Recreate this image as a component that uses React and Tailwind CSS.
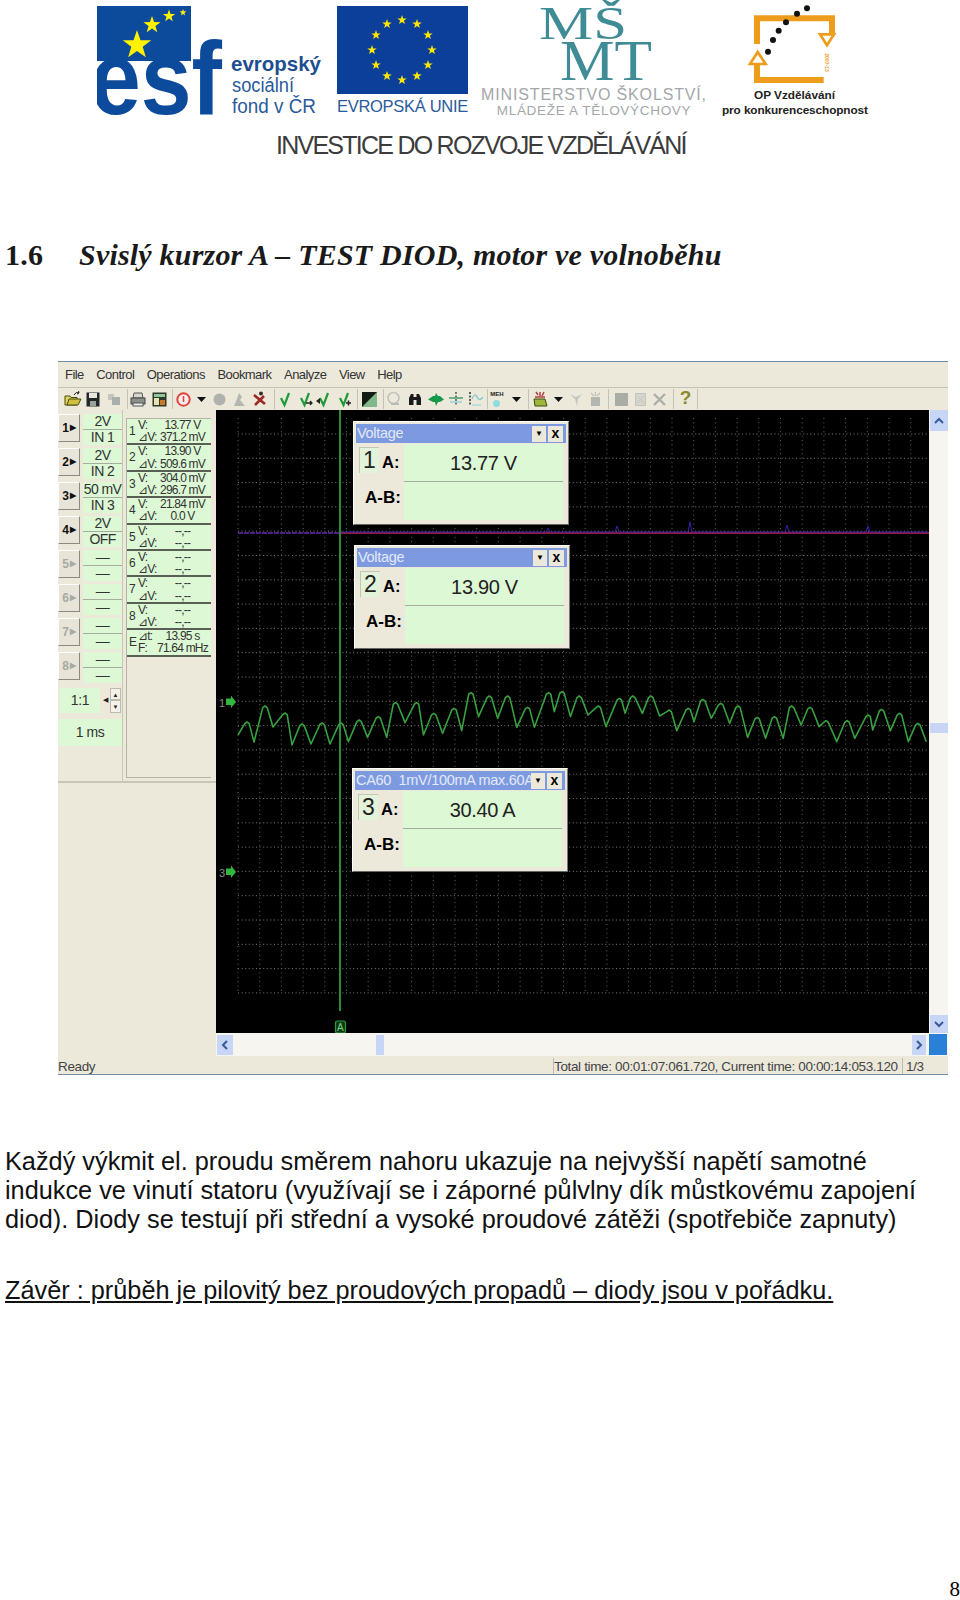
import React from 'react';

const SANS = "font-['Liberation_Sans',sans-serif]";

// channel buttons on the left of the scope window
const channels = [
    { id: 1, top: '2V', bottom: 'IN 1', on: true },
    { id: 2, top: '2V', bottom: 'IN 2', on: true },
    { id: 3, top: '50 mV', bottom: 'IN 3', on: true },
    { id: 4, top: '2V', bottom: 'OFF', on: true },
    { id: 5, top: '—', bottom: '—' },
    { id: 6, top: '—', bottom: '—' },
    { id: 7, top: '—', bottom: '—' },
    { id: 8, top: '—', bottom: '—' },
];

const readings = [
    ['1', 'V:', '13.77 V', '⊿V:', '371.2 mV'],
    ['2', 'V:', '13.90 V', '⊿V:', '509.6 mV'],
    ['3', 'V:', '304.0 mV', '⊿V:', '296.7 mV'],
    ['4', 'V:', '21.84 mV', '⊿V:', '0.0 V'],
    ['5', 'V:', '--,--', '⊿V:', '--,--'],
    ['6', 'V:', '--,--', '⊿V:', '--,--'],
    ['7', 'V:', '--,--', '⊿V:', '--,--'],
    ['8', 'V:', '--,--', '⊿V:', '--,--'],
    ['E', '⊿t:', '13.95 s', 'F:', '71.64 mHz'],
];

const menu = ['File', 'Control', 'Operations', 'Bookmark', 'Analyze', 'View', 'Help'];

// first part read off the page, the rest from a crop (x / 2.613, y / 3)
const waveStart = [[238, 735], [247, 722], [254, 742], [265, 706], [273, 727], [285, 713], [292, 745], [302, 724], [311, 744], [322, 723], [330, 744], [341, 723]];
const waveCrop = [22, 185, 50, 120, 72, 172, 100, 110, 122, 172, 145, 68, 170, 128, 200, 68, 218, 165, 245, 100, 268, 160, 298, 85, 318, 152, 342, 38, 362, 110, 390, 48, 412, 115, 438, 48, 462, 142, 490, 82, 508, 142, 545, 38, 560, 95, 580, 35, 602, 110, 625, 48, 648, 105, 675, 78, 695, 140, 730, 55, 745, 100, 765, 48, 790, 100, 812, 48, 835, 108, 860, 90, 880, 152, 910, 85, 925, 125, 948, 58, 970, 115, 995, 70, 1018, 130, 1040, 78, 1065, 172, 1090, 112, 1112, 175, 1135, 110, 1158, 175, 1180, 78, 1205, 135, 1228, 82, 1252, 140, 1270, 122, 1298, 185, 1325, 122, 1345, 175, 1380, 105, 1392, 150, 1415, 88, 1438, 152, 1462, 100, 1485, 185, 1510, 130, 1532, 185];

function wavePoints() {
    const pts = waveStart.map(([x, y]) => [x - 216, y - 410]);
    for (let i = 0; i < waveCrop.length; i += 2) {
        pts.push([340 + waveCrop[i] / 2.613 - 216, 680 + waveCrop[i + 1] / 3 - 410]);
    }
    const out = [];
    pts.forEach(([x, y], i) => {
        // peaks are rounded in the trace, valleys stay sharp
        if (i % 2 === 1) {
            out.push(`${x - 2.2},${y + 1.6}`, `${x},${y}`, `${x + 2.2},${y + 1.6}`);
        } else {
            out.push(`${x},${y}`);
        }
    });
    return out.join(' ');
}

function spikePoints() {
    const out = ['124,122'];
    [[332, 118], [401, 116], [474, 112], [571, 115], [652, 116]].forEach(([x, y]) => {
        out.push(`${x - 2},122`, `${x},${y}`, `${x + 2},122`);
    });
    out.push('712,122');
    return out.join(' ');
}

function starPoints(cx, cy, r) {
    const pts = [];
    for (let i = 0; i < 10; i++) {
        const rad = i % 2 === 0 ? r : r * 0.4;
        const a = -Math.PI / 2 + (i * Math.PI) / 5;
        pts.push(`${cx + rad * Math.cos(a)},${cy + rad * Math.sin(a)}`);
    }
    return pts.join(' ');
}

function EsfLogo() {
    return (
        <svg width="226" height="118" viewBox="0 0 226 118" className="shrink-0">
            <rect x="0" y="6" width="94" height="55" fill="#0c4a9b" />
            <polygon points={starPoints(40, 45, 15)} fill="#fff200" />
            <polygon points={starPoints(55, 25, 9)} fill="#fff200" />
            <polygon points={starPoints(72, 16, 6.5)} fill="#fff200" />
            <polygon points={starPoints(86, 12.5, 3.6)} fill="#fff200" />
            <text x="-7" y="114" fontSize="104" fontWeight="700" fill="#0c4a9b" textLength="132" lengthAdjust="spacingAndGlyphs">esf</text>
            <text x="134" y="71" fontSize="21" fontWeight="700" fill="#1d4e8f" textLength="90" lengthAdjust="spacingAndGlyphs">evropský</text>
            <text x="135" y="92" fontSize="20" fill="#2a5a9a" textLength="62" lengthAdjust="spacingAndGlyphs">sociální</text>
            <text x="135" y="113" fontSize="20" fill="#2a5a9a" textLength="84" lengthAdjust="spacingAndGlyphs">fond v ČR</text>
        </svg>
    );
}

function EuLogo() {
    const stars = [];
    for (let i = 0; i < 12; i++) {
        const a = (i * Math.PI) / 6;
        stars.push(<polygon key={i} points={starPoints(65 + 30 * Math.sin(a), 44 - 30 * Math.cos(a), 5)} fill="#ffe600" />);
    }
    return (
        <div className="ml-[14px] w-[131px] shrink-0">
            <svg width="131" height="88" viewBox="0 0 131 88" className="mt-[6px] block">
                <rect width="131" height="88" fill="#0b3f9a" />
                {stars}
            </svg>
            <div className="mt-[3px] text-[16.5px] leading-[18px] tracking-[-0.3px] whitespace-nowrap text-[#2a5a9a]">EVROPSKÁ UNIE</div>
        </div>
    );
}

function MsmtLogo() {
    return (
        <div className="ml-[12px] w-[228px] shrink-0">
            <svg width="228" height="87" viewBox="0 0 228 87" className="block">
                <g className="font-['Liberation_Serif',serif]" fill="#3f8c96">
                    <text x="59" y="39" fontSize="46" textLength="88" lengthAdjust="spacingAndGlyphs">MŠ</text>
                    <text x="80" y="80" fontSize="58" textLength="92" lengthAdjust="spacingAndGlyphs">MT</text>
                </g>
            </svg>
            <div className="text-center text-[16px] leading-[16px] tracking-[0.85px] whitespace-nowrap text-[#a3a7aa]">MINISTERSTVO ŠKOLSTVÍ,</div>
            <div className="text-center text-[13.5px] leading-[15px] tracking-[0.7px] whitespace-nowrap text-[#a3a7aa]">MLÁDEŽE A TĚLOVÝCHOVY</div>
        </div>
    );
}

function OpMark() {
    return (
        <svg width="96" height="86" viewBox="660 0 288 258" className="mx-auto block">
            <g fill="none" stroke="#ee9c1c">
                <path d="M690 132 V55 H915 V100" strokeWidth="18" />
                <path d="M690 190 V240 H890" strokeWidth="18" />
                <path d="M879 103 H921 L900 136 Z" strokeWidth="8" fill="#fff" />
                <path d="M669 192 H716 L692 156 Z" strokeWidth="8" fill="#fff" />
            </g>
            <g fill="#111">
                <circle cx="840" cy="25" r="9" />
                <circle cx="810" cy="41" r="9" />
                <circle cx="777" cy="67" r="9" />
                <circle cx="755" cy="92" r="9" />
                <circle cx="738" cy="120" r="9" />
                <circle cx="723" cy="155" r="9" />
            </g>
            <text x="0" y="0" fontSize="15" fontWeight="700" fill="#ee9c1c" transform="translate(893 160) rotate(90)">2007-13</text>
        </svg>
    );
}

function Header() {
    return (
        <header className="h-[170px]">
            <div className="flex pl-[97px]">
                <EsfLogo />
                <EuLogo />
                <MsmtLogo />
                <div className="ml-[14px] w-[145px] shrink-0 text-center font-bold text-[#222]">
                    <OpMark />
                    <div className="mt-[2px] text-[11.8px] leading-[15px]">OP Vzdělávání</div>
                    <div className="text-[11.8px] leading-[15px] whitespace-nowrap tracking-[-0.1px]">pro konkurenceschopnost</div>
                </div>
            </div>
            <div className="mt-[13px] ml-[276px] text-[25px] leading-[28px] tracking-[-1.75px] whitespace-nowrap text-[#3c3c3c]">
                INVESTICE DO ROZVOJE VZDĚLÁVÁNÍ
            </div>
        </header>
    );
}

function Check({ extra }) {
    return (
        <svg width="18" height="18" viewBox="0 0 18 18">
            <path d="M5 8 L8.5 15 L13 3" fill="none" stroke="#1f9a3a" strokeWidth="2.2" />
            {extra === 'right' && <path d="M10 13 H16 M14 11 L16 13 L14 15" stroke="#222" strokeWidth="1.3" fill="none" />}
            {extra === 'left' && <path d="M1 11 L5 8 V14 Z" fill="#222" />}
            {extra === 'plus' && <path d="M11 13 H16 M13.5 10.5 V15.5" stroke="#222" strokeWidth="1.5" />}
        </svg>
    );
}

function ToolIcon({ name }) {
    switch (name) {
        case 'open':
            return (
                <svg width="18" height="16" viewBox="0 0 18 16">
                    <path d="M1 5 H6 L7 6.5 H13 V14 H1 Z" fill="#e3d45a" stroke="#4a4a10" />
                    <path d="M3 14 L5 8 H17 L14 14 Z" fill="#cfc040" stroke="#4a4a10" />
                    <path d="M10 4 Q12 0 15 2 M13 3 L15 2 L14.5 0" fill="none" stroke="#222" />
                </svg>
            );
        case 'save':
            return (
                <svg width="14" height="15" viewBox="0 0 14 15">
                    <rect x="0.5" y="0.5" width="13" height="14" fill="#22282a" />
                    <rect x="3" y="1" width="8" height="5" fill="#e8e8e0" />
                    <rect x="4" y="9" width="6" height="5" fill="#9aa09a" />
                </svg>
            );
        case 'grayclip':
            return (
                <svg width="14" height="14" viewBox="0 0 14 14">
                    <rect x="1" y="2" width="6" height="6" fill="#c3c6c0" />
                    <rect x="5" y="5" width="8" height="8" fill="#a9afaa" />
                </svg>
            );
        case 'print':
            return (
                <svg width="16" height="15" viewBox="0 0 16 15">
                    <path d="M4 1 H12 L13 6 H3 Z" fill="#d8d8d0" stroke="#555" />
                    <rect x="1" y="6" width="14" height="6" fill="#8d8f8c" stroke="#444" />
                    <rect x="3" y="11" width="10" height="3" fill="#eee" stroke="#555" />
                </svg>
            );
        case 'panel':
            return (
                <svg width="15" height="15" viewBox="0 0 15 15">
                    <rect x="0.5" y="0.5" width="14" height="14" fill="#2c3a2a" />
                    <rect x="2" y="2" width="11" height="3" fill="#8fc79a" />
                    <rect x="2" y="6" width="5" height="7" fill="#e9e2b0" />
                    <rect x="8" y="8" width="5" height="5" fill="#c8792c" />
                </svg>
            );
        case 'power':
            return (
                <svg width="15" height="15" viewBox="0 0 15 15">
                    <circle cx="7.5" cy="7.5" r="6.2" fill="#fbeeee" stroke="#e0443c" strokeWidth="2" />
                    <path d="M7.5 4 V10" stroke="#e0443c" strokeWidth="1.6" />
                </svg>
            );
        case 'arrow':
            return <svg width="9" height="5" viewBox="0 0 9 5"><path d="M0 0 H9 L4.5 5 Z" fill="#111" /></svg>;
        case 'dot':
            return <svg width="13" height="13" viewBox="0 0 13 13"><circle cx="6.5" cy="6.5" r="6" fill="#b0b2ad" /></svg>;
        case 'grayman':
            return (
                <svg width="15" height="15" viewBox="0 0 15 15">
                    <path d="M7 1 L10 5 L8 8 L13 14 H2 L5 7 Z" fill="#b4b6b0" />
                </svg>
            );
        case 'redman':
            return (
                <svg width="15" height="16" viewBox="0 0 15 16">
                    <circle cx="9" cy="2.5" r="2" fill="#3a2a20" />
                    <path d="M2 4 L13 13 M12 5 L3 14" stroke="#9c2a24" strokeWidth="2.6" />
                </svg>
            );
        case 'check':
            return <Check />;
        case 'checkR':
            return <Check extra="right" />;
        case 'checkL':
            return <Check extra="left" />;
        case 'checkP':
            return <Check extra="plus" />;
        case 'contrast':
            return (
                <svg width="15" height="15" viewBox="0 0 15 15">
                    <rect width="15" height="15" fill="#7fb98a" />
                    <path d="M0 0 H15 L0 15 Z" fill="#121c14" />
                </svg>
            );
        case 'graysearch':
            return (
                <svg width="16" height="16" viewBox="0 0 16 16">
                    <circle cx="7.5" cy="7" r="5.5" fill="none" stroke="#c0c2bc" strokeWidth="1.6" />
                    <path d="M5 13 H13" stroke="#b8bab4" strokeWidth="2" />
                </svg>
            );
        case 'binoc':
            return (
                <svg width="14" height="14" viewBox="0 0 14 14">
                    <path d="M1 6 L3 2 H5.5 V13 H1 Z M13 6 L11 2 H8.5 V13 H13 Z" fill="#1a1a1a" />
                    <rect x="5" y="5" width="4" height="3" fill="#1a1a1a" />
                </svg>
            );
        case 'greenarrow':
            return (
                <svg width="16" height="13" viewBox="0 0 16 13">
                    <path d="M0 6.5 L5 3 H7 L8 0 L10 3 H12 L16 6.5 L12 9 H10 L8 13 L7 9 H5 Z" fill="#159a48" />
                </svg>
            );
        case 'cross':
            return (
                <svg width="16" height="16" viewBox="0 0 16 16">
                    <path d="M8 1 V15" stroke="#333" strokeWidth="1.2" strokeDasharray="2 1.5" />
                    <path d="M1 7 H15" stroke="#3b9a6a" strokeWidth="1.4" />
                    <path d="M2 11 H14" stroke="#8fd4d8" strokeWidth="1.4" />
                </svg>
            );
        case 'waves':
            return (
                <svg width="16" height="16" viewBox="0 0 16 16">
                    <path d="M2 1 V15" stroke="#222" strokeWidth="1.4" strokeDasharray="2 1.5" />
                    <path d="M4 8 Q7 1 9 6 T15 6" fill="none" stroke="#7fc8cc" strokeWidth="1.3" />
                    <path d="M4 14 H13" stroke="#9fdada" strokeWidth="1.3" />
                </svg>
            );
        case 'meh':
            return (
                <div className="relative h-[16px] w-[15px] text-center">
                    <span className="block text-[6px] leading-[7px] font-bold text-[#222]">MEH</span>
                    <span className="absolute top-[9px] left-[3px] h-[7px] w-[7px] rounded-full bg-[#8fdcdc]" />
                </div>
            );
        case 'folderabc':
            return (
                <svg width="16" height="16" viewBox="0 0 16 16">
                    <path d="M2 8 H13 L15 15 H3 Z" fill="#9fb63c" stroke="#3f4a10" />
                    <path d="M4 1 L6 4 M8 1 L8 5 M12 1 L10 5 M3 6 H13" stroke="#b0413c" strokeWidth="1.5" />
                </svg>
            );
        case 'graytip':
            return (
                <svg width="15" height="15" viewBox="0 0 15 15">
                    <path d="M1 2 L7 5 L13 2 L9 7 L8 14 L6 7 Z" fill="#c4c6c0" />
                </svg>
            );
        case 'graybox':
            return (
                <svg width="15" height="15" viewBox="0 0 15 15">
                    <rect x="3" y="5" width="9" height="9" fill="#b4b6b0" />
                    <path d="M3 1 L6 4 M12 1 L9 4 M7.5 0 V4" stroke="#bdbfb9" strokeWidth="1.2" />
                </svg>
            );
        case 'graysq':
            return <div className="h-[13px] w-[13px] bg-[#aaaca6]" />;
        case 'graysmall':
            return (
                <svg width="11" height="13" viewBox="0 0 11 13">
                    <rect x="0.5" y="0.5" width="10" height="12" fill="#d6d6ce" stroke="#c3c4bc" />
                    <path d="M2 3 L9 10 M9 3 L2 10" stroke="#c3c4bc" />
                </svg>
            );
        case 'grayx':
            return (
                <svg width="13" height="13" viewBox="0 0 13 13">
                    <path d="M1 1 L12 12 M12 1 L1 12" stroke="#acaea8" strokeWidth="2.4" />
                </svg>
            );
        case 'help':
            return <span className="text-[19px] leading-[19px] font-bold text-[#8a8a2a]">?</span>;
        default:
            return null;
    }
}

const tools = [
    ['open', 'w-[20px]'], ['save', 'w-[20px]'], ['grayclip', 'w-[22px]'], ['sep', 'w-[3px]'],
    ['print', 'w-[20px]'], ['panel', 'w-[22px]'], ['sep', 'w-[3px]'],
    ['power', 'w-[20px]'], ['arrow', 'w-[16px]'], ['dot', 'w-[20px]'], ['grayman', 'w-[20px]'], ['redman', 'w-[20px]'], ['sep', 'w-[6px]'],
    ['check', 'w-[20px]'], ['checkR', 'w-[19px]'], ['checkL', 'w-[20px]'], ['checkP', 'w-[20px]'], ['sep', 'w-[4px]'],
    ['contrast', 'w-[22px]'], ['sep', 'w-[4px]'],
    ['graysearch', 'w-[20px]'], ['binoc', 'w-[22px]'], ['greenarrow', 'w-[20px]'], ['cross', 'w-[20px]'], ['waves', 'w-[20px]'], ['sep', 'w-[2px]'],
    ['meh', 'w-[18px]'], ['arrow', 'w-[20px]'], ['sep', 'w-[3px]'],
    ['folderabc', 'w-[22px]'], ['arrow', 'w-[14px]'], ['graytip', 'w-[22px]'], ['graybox', 'w-[16px]'], ['sep', 'w-[6px]'],
    ['graysq', 'w-[24px]'], ['graysmall', 'w-[14px]'], ['grayx', 'w-[24px]'], ['sep', 'w-[3px]'],
    ['help', 'w-[23px]'], ['sep', 'w-[1px]'],
];

function Toolbar() {
    return (
        <div className="flex h-[23px] items-center border-t border-[#c4c2b6] bg-[#ece9db] pl-[5px]">
            {tools.map(([name, width], i) =>
                name === 'sep' ? (
                    <div key={i} className={`${width} h-[20px] shrink-0 border-r border-[#c4c2b6]`} />
                ) : (
                    <div key={i} className={`${width} flex h-[20px] shrink-0 items-center justify-center`}>
                        <div className="shrink-0"><ToolIcon name={name} /></div>
                    </div>
                )
            )}
        </div>
    );
}

function ChannelRow({ ch }) {
    return (
        <div className="flex h-[34px] items-start">
            <div className={`flex h-[28px] w-[22px] items-center justify-center border border-t-white border-l-white border-r-[#8c8a80] border-b-[#8c8a80] bg-[#e8e5d8] text-[12px] font-bold ${ch.on ? 'text-[#111]' : 'text-[#a9a9a2]'}`}>
                {ch.id}<span className="ml-[1px] text-[8px]">▶</span>
            </div>
            <div className="ml-[3px] w-[39px] text-center text-[14px] leading-[15px] tracking-[-0.6px] whitespace-nowrap text-[#333]">
                <div className="h-[15px] bg-[#dcf8d4]">{ch.top}</div>
                <div className="h-[16px] border-t border-[#a8aca0] bg-[#dcf8d4]">{ch.bottom}</div>
            </div>
        </div>
    );
}

function ReadingRow({ row }) {
    return (
        <div className="grid h-[26.4px] grid-cols-[11px_19px_minmax(0,1fr)] border-b-2 border-[#5a5f56] bg-[#dcf8d4] text-[12px] leading-[12.2px] tracking-[-0.8px] text-[#333]">
            <div className="row-span-2 pl-[2px] text-[12px] leading-[24px]">{row[0]}</div>
            <div className="whitespace-nowrap">{row[1]}</div>
            <div className="pr-[3px] text-center whitespace-nowrap">{row[2]}</div>
            <div className="whitespace-nowrap">{row[3]}</div>
            <div className="pr-[3px] text-center whitespace-nowrap">{row[4]}</div>
        </div>
    );
}

function LeftPanel() {
    return (
        <aside className="w-[158px] shrink-0 bg-[#ece9db]">
            <div className="flex h-[373px] border-b-2 border-[#c9c6b8]">
                <div className="w-[65px] shrink-0 border-r border-[#c9c6b8] pt-[4px]">
                    {channels.map((ch) => <ChannelRow key={ch.id} ch={ch} />)}
                    <div className="mt-[2px] flex h-[25px] w-[63px] items-center pl-[2px]">
                        <div className="flex h-full w-[40px] items-center justify-center bg-[#dcf8d4] text-[14px] tracking-[-0.3px] text-[#333]">1:1</div>
                        <div className="flex h-full w-[10px] items-center justify-center text-[7px] text-[#222]">◀</div>
                        <div className="flex h-full w-[11px] flex-col text-center text-[6px] leading-[12px] text-[#222]">
                            <div className="h-[12px] border border-[#bdbbae] bg-[#f3f1e8]">▲</div>
                            <div className="h-[13px] border border-[#bdbbae] bg-[#f3f1e8]">▼</div>
                        </div>
                    </div>
                    <div className="mt-[6px] flex h-[27px] w-[64px] items-center justify-center bg-[#dcf8d4] text-[14px] tracking-[-0.5px] text-[#333]">1 ms</div>
                </div>
                <div className="min-w-0 flex-1 pt-[8px] pr-[5px] pl-[3px]">
                    <div className="h-[360px] border-t border-b border-l border-[#b5b3a6]">
                        {readings.map((row) => <ReadingRow key={row[0]} row={row} />)}
                    </div>
                </div>
            </div>
        </aside>
    );
}

function Dialog({ title, channel, value, className }) {
    return (
        <div className={`absolute flex h-[104px] w-[216px] flex-col border border-t-white border-l-white border-r-[#777] border-b-[#666] bg-[#ece9db] p-[2px] ${className}`}>
            <div className="flex h-[19px] items-center justify-between bg-[#7d9ae0] pr-[3px] pl-[1px]">
                <span className="overflow-hidden text-[14.5px] leading-[19px] tracking-[-0.3px] whitespace-pre text-[#e3e9fb]">{title}</span>
                <div className="flex shrink-0 gap-[2px] text-black">
                    <span className="flex h-[16px] w-[14px] items-center justify-center bg-[#ece9db] text-[8px]">▼</span>
                    <span className="flex h-[16px] w-[15px] items-center justify-center bg-[#ece9db] text-[14px] font-bold">x</span>
                </div>
            </div>
            <div className="flex flex-1 pt-[1px] text-black">
                <div className="relative w-[48px] shrink-0">
                    <span className="absolute top-[3px] left-[3px] h-[26px] w-[20px] border-t border-l border-[#c5c4b6] bg-[#e3f3da] text-center text-[23px] leading-[24px] text-[#222]">{channel}</span>
                    <span className="absolute top-[8px] left-[26px] text-[16.5px] leading-[20px] font-bold">A:</span>
                    <span className="absolute top-[44px] left-[9px] text-[17px] leading-[20px] font-bold">A-B:</span>
                </div>
                <div className="flex-1 pr-[3px]">
                    <div className="flex h-[38px] items-center justify-center border-b border-[#a8aca0] bg-[#dcf8d4] text-[20px] tracking-[-0.3px] text-[#222]">{value}</div>
                    <div className="h-[38px] bg-[#dcf8d4]" />
                </div>
            </div>
        </div>
    );
}

function ScopeDrawing() {
    const cols = [];
    for (let i = 0; i < 32; i++) cols.push(22 + i * 21.7);
    const rows = [];
    for (let i = 0; i < 24; i++) rows.push(24 + i * 24.3);
    return (
        <svg className="absolute inset-0" width="713" height="623" viewBox="0 0 713 623">
            {rows.map((y) => <path key={y} d={`M22 ${y} H712`} stroke="#7d7d76" strokeWidth="1" strokeDasharray="1 2.6" />)}
            {cols.map((x) => <path key={x} d={`M${x} 8 V584`} stroke="#62625c" strokeWidth="1" strokeDasharray="1 3.4" />)}
            <path d="M124 123 H713" stroke="#8e1846" strokeWidth="2" />
            <path d="M22 123 H124" stroke="#4a1f8a" strokeWidth="2" strokeDasharray="5 1" />
            <polyline points={spikePoints()} fill="none" stroke="#3422a8" strokeWidth="1" />
            <path d="M124 0 V601" stroke="#2e8b36" strokeWidth="2" />
            <polyline points={wavePoints()} fill="none" stroke="#38a040" strokeWidth="1.6" strokeLinejoin="round" />
            <polygon points="10,288.5 15,288.5 15,285.5 20,292 15,298 15,295 10,295" fill="#2fb83c" />
            <polygon points="10,458.5 15,458.5 15,455.5 20,462 15,468 15,465 10,465" fill="#2fb83c" />
            <text x="3" y="297" fontSize="11" fill="#8a8a82">1</text>
            <text x="3" y="467" fontSize="11" fill="#8a8a82">3</text>
            <rect x="119.5" y="611" width="10" height="12" rx="2" fill="#0d3a12" stroke="#2e9a3a" strokeWidth="1.2" />
            <text x="121" y="621" fontSize="10" fill="#7fd08a">A</text>
        </svg>
    );
}

function Chevron({ d }) {
    return (
        <svg width="10" height="10" viewBox="0 0 10 10">
            <path d={d} fill="none" stroke="#3a5a9a" strokeWidth="2" />
        </svg>
    );
}

function ScopeWindow() {
    return (
        <section className="mt-[87px] ml-[58px] flex h-[714px] w-[890px] flex-col border-t border-[#6f8fa8] bg-[#ece9db] text-[#333]">
            <nav className="flex h-[25px] items-center gap-[12.5px] pl-[7px] text-[13px] tracking-[-0.55px]">
                {menu.map((m) => <span key={m}>{m}</span>)}
            </nav>
            <Toolbar />
            <div className="flex h-[646px]">
                <LeftPanel />
                <div className="flex flex-1 flex-col">
                    <div className="flex h-[623px]">
                        <div className="relative w-[713px] shrink-0 bg-black">
                            <ScopeDrawing />
                            <Dialog title="Voltage" channel="1" value="13.77 V" className="top-[11px] left-[137px]" />
                            <Dialog title="Voltage" channel="2" value="13.90 V" className="top-[135px] left-[138px]" />
                            <Dialog title="CA60  1mV/100mA max.60A" channel="3" value="30.40 A" className="top-[358px] left-[136px]" />
                        </div>
                        <div className="flex flex-1 flex-col items-center bg-[#f6f5f0]">
                            <div className="flex h-[21px] w-[18px] items-center justify-center bg-[#c7d6f6]"><Chevron d="M1 7 L5 3 L9 7" /></div>
                            <div className="mt-[292px] h-[10px] w-[18px] bg-[#c7d6f6]" />
                            <div className="mt-auto flex h-[18px] w-[18px] items-center justify-center bg-[#c7d6f6]"><Chevron d="M1 3 L5 7 L9 3" /></div>
                        </div>
                    </div>
                    <div className="flex h-[23px] items-center bg-[#f6f5f0]">
                        <div className="ml-[1px] flex h-[20px] w-[16px] items-center justify-center bg-[#c7d6f6]"><Chevron d="M7 1 L3 5 L7 9" /></div>
                        <div className="ml-[143px] h-[20px] w-[8px] bg-[#c7d6f6]" />
                        <div className="ml-[528px] flex h-[20px] w-[14px] items-center justify-center bg-[#c7d6f6]"><Chevron d="M3 1 L7 5 L3 9" /></div>
                        <div className="ml-[3px] h-[21px] w-[18px] bg-[#2a7fd6]" />
                    </div>
                </div>
            </div>
            <footer className="flex h-[19px] border-b border-[#6f8fa8] pt-[2px] text-[13.5px] leading-[17px] tracking-[-0.35px] text-[#444]">
                <div className="w-[495px] shrink-0">Ready</div>
                <div className="w-[350px] shrink-0 border-r border-l border-[#bdbbae] whitespace-nowrap">Total time: 00:01:07:061.720, Current time: 00:00:14:053.120</div>
                <div className="pl-[3px]">1/3</div>
            </footer>
        </section>
    );
}

export default function App() {
    return (
        <div className={`${SANS} h-[1600px] w-[960px] overflow-hidden bg-white text-black`}>
            <Header />
            <h2 className="mt-[64px] flex h-[40px] items-center pl-[5px] font-['Liberation_Serif',serif] text-[30px] font-bold tracking-[0.2px] text-[#1a1a1a]">
                <span className="w-[74px]">1.6</span>
                <em>Svislý kurzor A – TEST DIOD, motor ve volnoběhu</em>
            </h2>
            <ScopeWindow />
            <p className="mt-[72px] pl-[5px] text-[25.3px] leading-[29px] whitespace-nowrap text-[#111]">
                Každý výkmit el. proudu směrem nahoru ukazuje na nejvyšší napětí samotné<br />
                indukce ve vinutí statoru (využívají se i záporné půlvlny dík můstkovému zapojení<br />
                diod). Diody se testují při střední a vysoké proudové zátěži (spotřebiče zapnuty)
            </p>
            <p className="mt-[42px] pl-[5px] text-[25.3px] leading-[29px] whitespace-nowrap text-[#111] underline">
                Závěr : průběh je pilovitý bez proudových propadů – diody jsou v pořádku.
            </p>
            <div className="mt-[272px] text-right font-['Liberation_Serif',serif] text-[21px] leading-[24px]">8</div>
        </div>
    );
}
